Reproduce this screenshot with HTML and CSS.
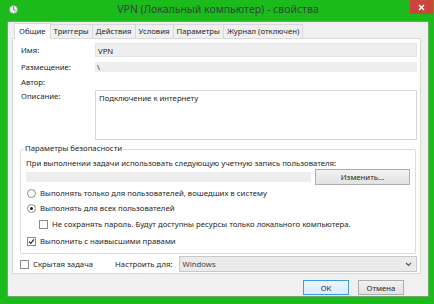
FILE: index.html
```html
<!DOCTYPE html>
<html lang="ru">
<head>
    <meta charset="UTF-8">
    <title>VPN (Локальный компьютер) - свойства</title>
    <link rel="stylesheet" href="styles.css">
</head>
<body>
    <div class="window">
        <div class="titlebar">
            <span class="app-icon">
                <svg width="9" height="9" viewBox="0 0 9 9">
                    <circle cx="4.5" cy="4.5" r="4" fill="#e8efe8" stroke="#8aa08a" stroke-width="0.8"/>
                    <path d="M4.5 4.5 L4.5 1.5 M4.5 4.5 L6.6 5.6" stroke="#6a7a6a" stroke-width="0.9" fill="none"/>
                </svg>
            </span>
            <span class="title">VPN (Локальный компьютер) - свойства</span>
            <span class="close-btn">
                <svg width="7" height="7" viewBox="0 0 7 7">
                    <path d="M1 1 L6 6 M6 1 L1 6" stroke="#fff" stroke-width="1.4"/>
                </svg>
            </span>
        </div>

        <div class="client">
            <div class="tabs">
                <span class="tab active">Общие</span>
                <span class="tab">Триггеры</span>
                <span class="tab">Действия</span>
                <span class="tab">Условия</span>
                <span class="tab">Параметры</span>
                <span class="tab">Журнал (отключен)</span>
            </div>

            <div class="panel">
                <div class="row row-name">
                    <span class="label">Имя:</span>
                    <span class="field field-name">VPN</span>
                </div>
                <div class="row row-place">
                    <span class="label">Размещение:</span>
                    <span class="field field-place">\</span>
                </div>
                <div class="row row-author">
                    <span class="label">Автор:</span>
                </div>
                <div class="row row-desc">
                    <span class="label label-top">Описание:</span>
                    <div class="textarea">Подключение к интернету</div>
                </div>

                <div class="group">
                    <span class="legend">Параметры безопасности</span>
                    <p class="group-text">При выполнении задачи использовать следующую учетную запись пользователя:</p>
                    <div class="account-row">
                        <span class="account-field"></span>
                        <span class="btn btn-change">Изменить...</span>
                    </div>
                    <div class="option option-first">
                        <span class="radio"></span>
                        <span>Выполнять только для пользователей, вошедших в систему</span>
                    </div>
                    <div class="option">
                        <span class="radio checked"></span>
                        <span>Выполнять для всех пользователей</span>
                    </div>
                    <div class="option option-indent">
                        <span class="check"></span>
                        <span>Не сохранять пароль. Будут доступны ресурсы только локального компьютера.</span>
                    </div>
                    <div class="option option-last">
                        <span class="check checked">
                            <svg width="7" height="7" viewBox="0 0 7 7">
                                <path d="M1 3.6 L2.8 5.4 L6 1.4" stroke="#222" stroke-width="1.2" fill="none"/>
                            </svg>
                        </span>
                        <span>Выполнить с наивысшими правами</span>
                    </div>
                </div>

                <div class="bottom-row">
                    <span class="check"></span>
                    <span class="hidden-label">Скрытая задача</span>
                    <span class="config-label">Настроить для:</span>
                    <div class="select">
                        <span>Windows</span>
                        <svg width="7" height="5" viewBox="0 0 7 5">
                            <path d="M1 1 L3.5 3.5 L6 1" stroke="#555" stroke-width="1.1" fill="none"/>
                        </svg>
                    </div>
                </div>
            </div>

            <div class="footer">
                <span class="btn btn-ok">ОК</span>
                <span class="btn btn-cancel">Отмена</span>
            </div>
        </div>
    </div>
</body>
</html>
```

FILE: styles.css
```css
body {
    margin: 0;
    background-color: #1cbb1c;
    font-family: 'Noto Sans', 'Open Sans', sans-serif;
    font-size: 7.75px;
    color: #262626;
}

.window {
    width: 434px;
    height: 304px;
    box-sizing: border-box;
    padding: 0 5px 7px 7px;
    display: flex;
    flex-direction: column;
    background-color: #1cbb1c;
}

.titlebar {
    height: 21px;
    position: relative;
    display: flex;
    align-items: center;
    justify-content: center;
}

.app-icon {
    position: absolute;
    left: 2px;
    top: 5px;
}

.title {
    font-size: 10.5px;
    color: #33443a;
    margin-top: -3px;
}

.close-btn {
    position: absolute;
    right: -4px;
    top: 0;
    width: 23px;
    height: 14px;
    background-color: #c9463d;
    display: flex;
    align-items: center;
    justify-content: center;
}

.client {
    flex: 1;
    background-color: #f0f0f0;
    border: 1px solid #6fa86f;
    display: flex;
    flex-direction: column;
    padding: 0 7px 0 4px;
}

.tabs {
    display: flex;
    align-items: flex-end;
    height: 16px;
    padding-left: 2px;
    position: relative;
    z-index: 1;
}

.tab {
    height: 13px;
    line-height: 13px;
    padding: 0 3px;
    border: 1px solid #d9d9d9;
    border-bottom: none;
    margin-right: -1px;
    background-color: #f0f0f0;
    white-space: nowrap;
}

.tab.active {
    height: 15px;
    line-height: 15px;
    background-color: #fff;
    padding: 0 4px;
    margin-bottom: -1px;
}

.panel {
    height: 234px;
    background-color: #fff;
    border: 1px solid #d9d9d9;
    padding: 0 3px 0 8px;
    display: flex;
    flex-direction: column;
}

.row {
    display: flex;
    align-items: center;
}

.label {
    width: 74px;
    flex-shrink: 0;
}

.field {
    flex: 1;
    background-color: #eeeeee;
    box-sizing: border-box;
    padding-left: 2px;
}

.row-name {
    margin-top: 4px;
}

.field-name {
    height: 14px;
    line-height: 14px;
    border: 1px solid #e4e4e4;
}

.row-place {
    margin-top: 5px;
}

.field-place {
    height: 10px;
    line-height: 10px;
}

.row-author {
    margin-top: 4px;
    height: 12px;
}

.row-desc {
    margin-top: 2px;
    align-items: flex-start;
}

.label-top {
    padding-top: 1px;
}

.textarea {
    flex: 1;
    height: 50px;
    box-sizing: border-box;
    border: 1px solid #d6d6d6;
    padding: 2px 3px;
}

.group {
    position: relative;
    margin: 9px 1px 0 -1px;
    height: 103px;
    border: 1px solid #dcdcdc;
    border-radius: 2px;
    padding: 0 5px;
}

.legend {
    position: absolute;
    top: -7px;
    left: 3px;
    background-color: #fff;
    padding: 0 1px;
}

.group-text {
    margin: 8px 0 0 0;
    white-space: nowrap;
}

.account-row {
    display: flex;
    align-items: center;
    margin-top: 1px;
}

.account-field {
    width: 285px;
    height: 10px;
    background-color: #eeeeee;
}

.btn {
    box-sizing: border-box;
    border: 1px solid #adadad;
    background: linear-gradient(#f2f2f2, #e2e2e2);
    display: flex;
    align-items: center;
    justify-content: center;
}

.btn-change {
    margin-left: 4px;
    width: 95px;
    height: 16px;
}

.option {
    display: flex;
    align-items: center;
    gap: 4px;
    height: 12px;
    white-space: nowrap;
}

.option-first {
    margin-top: 2px;
}

.option + .option {
    margin-top: 3px;
}

.option-indent {
    margin-left: 12px;
    margin-top: 4px !important;
}

.option-last {
    margin-top: 5px !important;
}

.radio {
    width: 7px;
    height: 7px;
    border: 1px solid #8c8c8c;
    border-radius: 50%;
    background-color: #fff;
    margin-left: 1px;
    position: relative;
}

.radio.checked::after {
    content: "";
    position: absolute;
    left: 2px;
    top: 2px;
    width: 3px;
    height: 3px;
    border-radius: 50%;
    background-color: #222;
}

.check {
    width: 7px;
    height: 7px;
    border: 1px solid #8c8c8c;
    background-color: #fff;
    display: flex;
    align-items: center;
    justify-content: center;
    margin-left: 1px;
}

.bottom-row {
    display: flex;
    align-items: center;
    margin-top: 2px;
    height: 16px;
}

.bottom-row .check {
    margin-left: -1px;
}

.hidden-label {
    margin-left: 4px;
}

.config-label {
    margin-left: 22px;
}

.select {
    margin-left: 6px;
    flex: 1;
    height: 16px;
    box-sizing: border-box;
    border: 1px solid #c8c8c8;
    background-color: #ebebeb;
    display: flex;
    align-items: center;
    justify-content: space-between;
    padding: 0 4px 0 3px;
    color: #444;
}

.footer {
    display: flex;
    justify-content: flex-end;
    gap: 9px;
    padding: 6px 17px 0 0;
}

.btn-ok,
.btn-cancel {
    width: 46px;
    height: 15px;
}

.btn-ok {
    border-color: #3c9cdc;
    background: linear-gradient(#ecf5fc, #dcecfc);
}
```
